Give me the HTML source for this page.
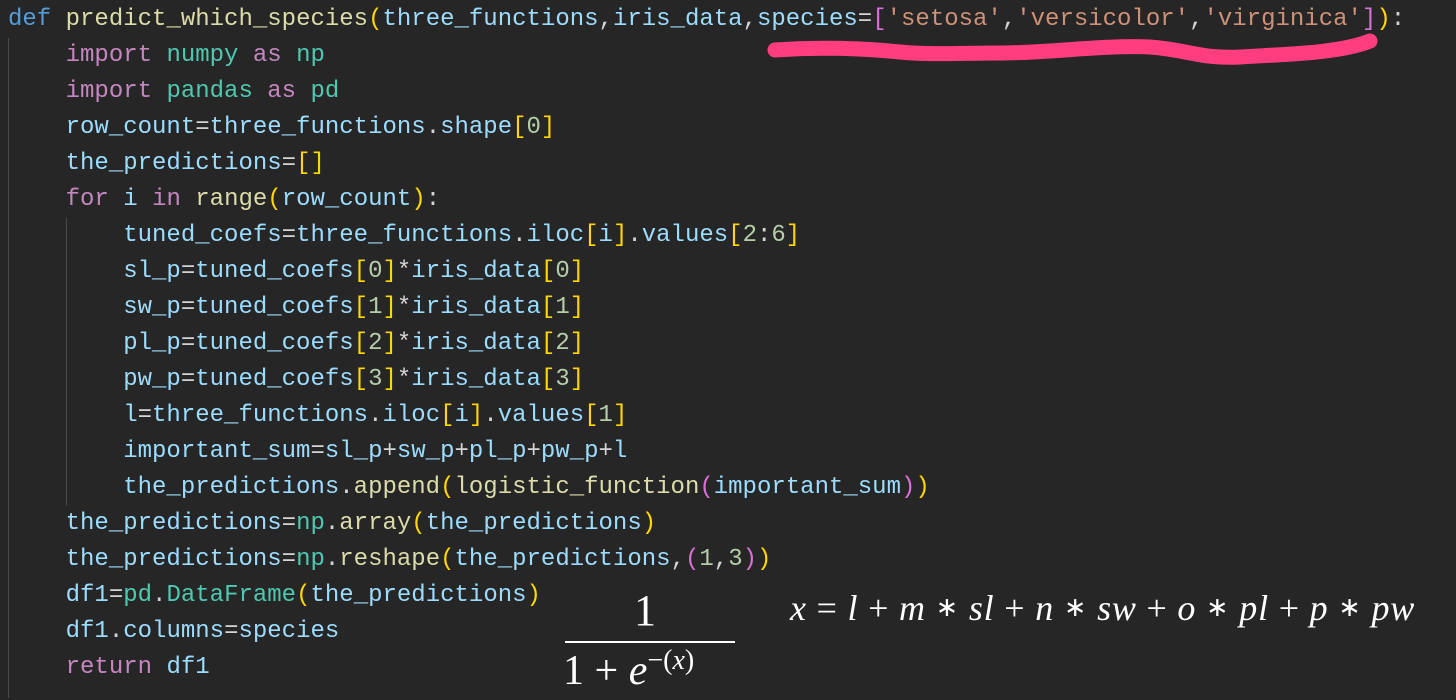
<!DOCTYPE html>
<html><head><meta charset="utf-8"><style>
body{margin:0;width:1456px;height:700px;background:#262626;overflow:hidden;position:relative;font-family:"Liberation Mono",monospace;}
.code{position:absolute;left:8px;top:2px;font-size:24px;line-height:36px;color:#d4d4d4;white-space:pre;}
.k{color:#569cd6}.f{color:#dcdcaa}.p{color:#9cdcfe}.y{color:#ffd700}.m{color:#da70d6}.b{color:#179fff}
.i{color:#c586c0}.t{color:#4ec9b0}.s{color:#ce9178}.n{color:#b5cea8}
.g{position:absolute;width:1px;background:#4a4a4a}
.math{position:absolute;font-family:"Liberation Serif",serif;color:#fff;white-space:pre}
.a{font-size:0.75em;vertical-align:0.15em}
</style></head><body>
<div class="g" style="left:8px;top:38px;height:660px"></div>
<div class="g" style="left:66px;top:218px;height:288px"></div>
<div class="code"><span class="k">def</span> <span class="f">predict_which_species</span><span class="y">(</span><span class="p">three_functions</span>,<span class="p">iris_data</span>,<span class="p">species</span>=<span class="m">[</span><span class="s">'setosa'</span>,<span class="s">'versicolor'</span>,<span class="s">'virginica'</span><span class="m">]</span><span class="y">)</span>:
    <span class="i">import</span> <span class="t">numpy</span> <span class="i">as</span> <span class="t">np</span>
    <span class="i">import</span> <span class="t">pandas</span> <span class="i">as</span> <span class="t">pd</span>
    <span class="p">row_count</span>=<span class="p">three_functions</span>.<span class="p">shape</span><span class="y">[</span><span class="n">0</span><span class="y">]</span>
    <span class="p">the_predictions</span>=<span class="y">[]</span>
    <span class="i">for</span> <span class="p">i</span> <span class="i">in</span> <span class="f">range</span><span class="y">(</span><span class="p">row_count</span><span class="y">)</span>:
        <span class="p">tuned_coefs</span>=<span class="p">three_functions</span>.<span class="p">iloc</span><span class="y">[</span><span class="p">i</span><span class="y">]</span>.<span class="p">values</span><span class="y">[</span><span class="n">2</span>:<span class="n">6</span><span class="y">]</span>
        <span class="p">sl_p</span>=<span class="p">tuned_coefs</span><span class="y">[</span><span class="n">0</span><span class="y">]</span>*<span class="p">iris_data</span><span class="y">[</span><span class="n">0</span><span class="y">]</span>
        <span class="p">sw_p</span>=<span class="p">tuned_coefs</span><span class="y">[</span><span class="n">1</span><span class="y">]</span>*<span class="p">iris_data</span><span class="y">[</span><span class="n">1</span><span class="y">]</span>
        <span class="p">pl_p</span>=<span class="p">tuned_coefs</span><span class="y">[</span><span class="n">2</span><span class="y">]</span>*<span class="p">iris_data</span><span class="y">[</span><span class="n">2</span><span class="y">]</span>
        <span class="p">pw_p</span>=<span class="p">tuned_coefs</span><span class="y">[</span><span class="n">3</span><span class="y">]</span>*<span class="p">iris_data</span><span class="y">[</span><span class="n">3</span><span class="y">]</span>
        <span class="p">l</span>=<span class="p">three_functions</span>.<span class="p">iloc</span><span class="y">[</span><span class="p">i</span><span class="y">]</span>.<span class="p">values</span><span class="y">[</span><span class="n">1</span><span class="y">]</span>
        <span class="p">important_sum</span>=<span class="p">sl_p</span>+<span class="p">sw_p</span>+<span class="p">pl_p</span>+<span class="p">pw_p</span>+<span class="p">l</span>
        <span class="p">the_predictions</span>.<span class="f">append</span><span class="y">(</span><span class="f">logistic_function</span><span class="m">(</span><span class="p">important_sum</span><span class="m">)</span><span class="y">)</span>
    <span class="p">the_predictions</span>=<span class="t">np</span>.<span class="f">array</span><span class="y">(</span><span class="p">the_predictions</span><span class="y">)</span>
    <span class="p">the_predictions</span>=<span class="t">np</span>.<span class="f">reshape</span><span class="y">(</span><span class="p">the_predictions</span>,<span class="m">(</span><span class="n">1</span>,<span class="n">3</span><span class="m">)</span><span class="y">)</span>
    <span class="p">df1</span>=<span class="t">pd</span>.<span class="t">DataFrame</span><span class="y">(</span><span class="p">the_predictions</span><span class="y">)</span>
    <span class="p">df1</span>.<span class="p">columns</span>=<span class="p">species</span>
    <span class="i">return</span> <span class="p">df1</span></div>
<svg style="position:absolute;left:0;top:0" width="1456" height="700">
<path d="M775 50 C820 47 860 48 900 52 C930 55 960 53 1000 53 C1050 53 1100 45 1150 47 C1190 50 1200 59 1240 57 C1290 54 1340 53 1370 41" stroke="#ff3d7f" stroke-width="15" fill="none" stroke-linecap="round"/>
<rect x="565" y="641" width="170" height="2" fill="#fff"/>
</svg>
<div class="math" style="left:634px;top:585px;font-size:44px">1</div>
<div class="math" style="left:563px;top:645px;font-size:42px">1 + <i>e</i><sup style="font-size:28px">−(<i>x</i>)</sup></div>
<div class="math" style="left:790px;top:587px;font-size:36px;letter-spacing:0.8px"><i>x</i> = <i>l</i> + <i>m</i> <span class="a">∗</span> <i>sl</i> + <i>n</i> <span class="a">∗</span> <i>sw</i> + <i>o</i> <span class="a">∗</span> <i>pl</i> + <i>p</i> <span class="a">∗</span> <i>pw</i></div>
</body></html>
